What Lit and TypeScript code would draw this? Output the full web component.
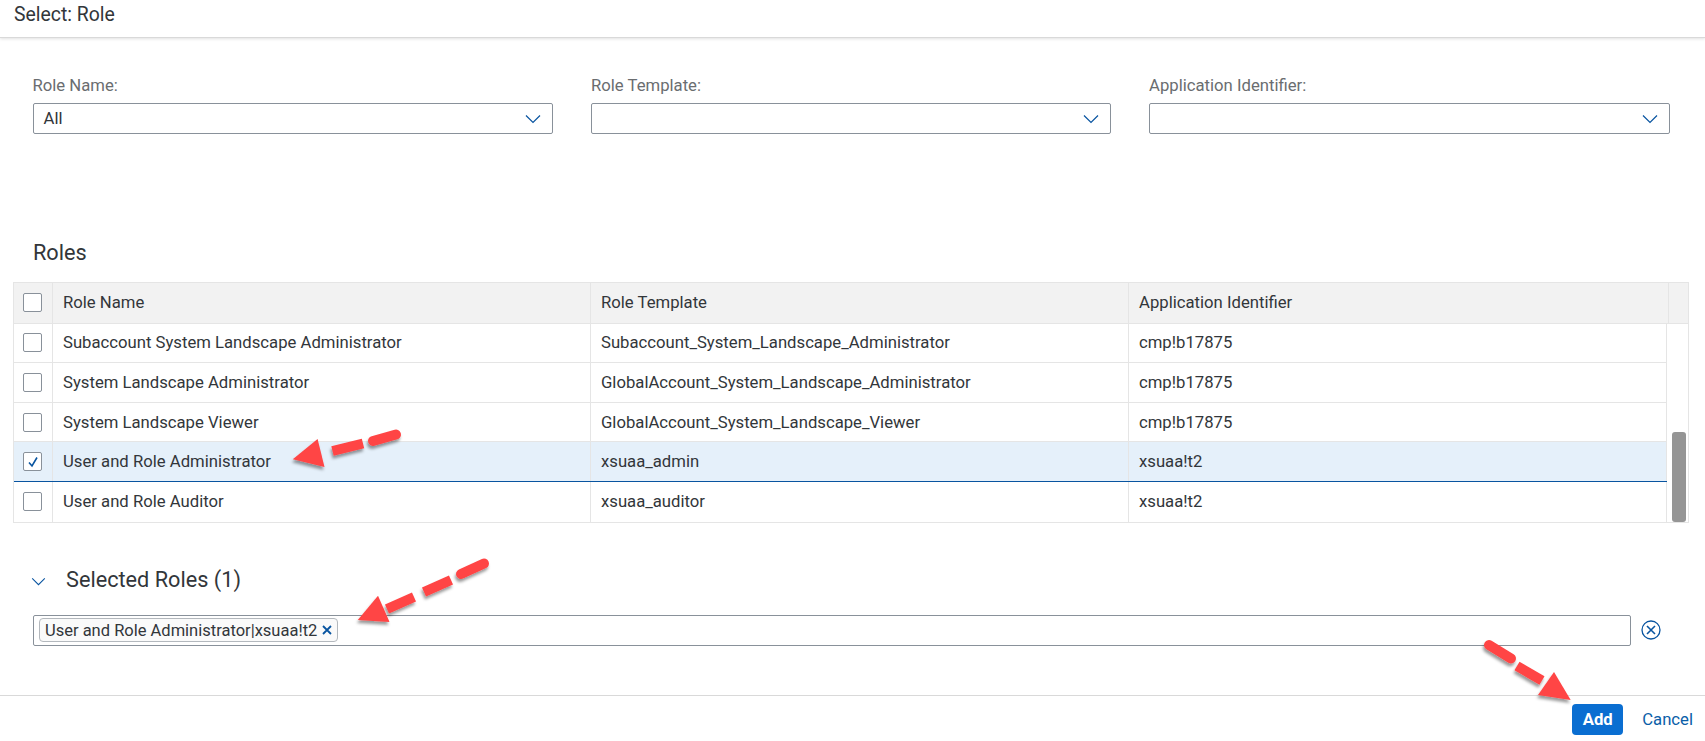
import { LitElement, html, css, svg } from 'lit';
import { customElement } from 'lit/decorators.js';

const ROWS = [
  ['Subaccount System Landscape Administrator', 'Subaccount_System_Landscape_Administrator', 'cmp!b17875'],
  ['System Landscape Administrator', 'GlobalAccount_System_Landscape_Administrator', 'cmp!b17875'],
  ['System Landscape Viewer', 'GlobalAccount_System_Landscape_Viewer', 'cmp!b17875'],
  ['User and Role Administrator', 'xsuaa_admin', 'xsuaa!t2'],
  ['User and Role Auditor', 'xsuaa_auditor', 'xsuaa!t2'],
];
const SELECTED = 3;

const chevron = html`<svg class="chev" viewBox="0 0 16 10" width="16" height="10"><path d="M1 1.5 L8 8.5 L15 1.5" fill="none" stroke="#0854a0" stroke-width="1.2"/></svg>`;

@customElement('app-root')
export class AppRoot extends LitElement {
  static styles = css`
    :host {
      display: block;
      position: relative;
      height: 741px;
      overflow: hidden;
      background: #fff;
      color: #32363a;
      font-family: Roboto, "Liberation Sans", sans-serif;
      font-size: 16.7px;
    }
    * { box-sizing: border-box; }

    .head {
      height: 38px;
      padding: 3px 0 0 14px;
      font-size: 19.4px;
      line-height: 24px;
      border-bottom: 1px solid #d9d9d9;
      box-shadow: 0 1px 3px rgba(0, 0, 0, 0.12);
    }

    .filters {
      display: grid;
      grid-template-columns: 520px 519.5px 521px;
      column-gap: 38.5px;
      padding: 37px 0 0 32.5px;
    }
    .label {
      display: block;
      height: 28px;
      line-height: 22px;
      color: #6a6d70;
    }
    .select {
      display: flex;
      align-items: center;
      justify-content: space-between;
      height: 31px;
      padding: 0 11px 0 10px;
      border: 1px solid #89919a;
      border-radius: 2px;
    }

    h2 {
      margin: 0;
      font-weight: 400;
      font-size: 21.7px;
    }
    .roles-title {
      margin: 103px 0 0 33px;
      height: 45px;
      line-height: 31px;
    }

    .table {
      margin-left: 13px;
      width: 1676px;
      border: 1px solid #e5e5e5;
    }
    .row {
      display: grid;
      grid-template-columns: 39px 538px 538px 538px;
      height: 39.6px;
      border-bottom: 1px solid #e5e5e5;
    }
    .row.header {
      grid-template-columns: 39px 538px 538px 539.5px 1fr;
      height: 40.6px;
      background: #f2f2f2;
    }
    .row.selected {
      background: #e5f0fa;
      border-bottom-color: #0854a0;
    }
    .row.last {
      border-bottom: none;
    }
    .cell {
      display: flex;
      align-items: center;
      padding-left: 10px;
      border-right: 1px solid #e5e5e5;
      white-space: nowrap;
      overflow: hidden;
    }
    .cell.box {
      padding-left: 9px;
    }
    .check {
      display: flex;
      align-items: center;
      justify-content: center;
      width: 19px;
      height: 19px;
      background: #fff;
      border: 1px solid #89919a;
      border-radius: 2px;
    }
    .body {
      display: flex;
    }
    .rows {
      flex: none;
      width: 1653px;
    }
    .track {
      flex: 1;
      display: flex;
      flex-direction: column;
      justify-content: flex-end;
      padding: 0 2px 0 4.5px;
    }
    .thumb {
      height: 90px;
      background: #959595;
      border-radius: 3px;
    }

    .selected-head {
      display: flex;
      align-items: center;
      margin: 39.4px 0 0 31px;
      height: 36px;
    }
    .selected-head svg {
      flex: none;
      margin-top: 3px;
    }
    .selected-head h2 {
      margin-left: 20px;
    }

    .tokens-line {
      display: flex;
      align-items: center;
      margin: 17px 0 0 33px;
    }
    .tokens {
      display: flex;
      align-items: center;
      width: 1598px;
      height: 31px;
      padding-left: 5px;
      border: 1px solid #89919a;
      border-radius: 2px;
    }
    .token {
      display: flex;
      align-items: center;
      height: 24px;
      padding: 0 5px 0 5px;
      gap: 5px;
      font-size: 16.5px;
      background: #fafafa;
      border: 1px solid #b3b8bd;
      border-radius: 4px;
      white-space: nowrap;
    }
    .clear {
      margin-left: 10px;
      flex: none;
    }

    .foot {
      display: flex;
      align-items: center;
      justify-content: flex-end;
      margin-top: 49px;
      height: 46px;
      padding: 0 12px 6px 0;
      border-top: 1px solid #d9d9d9;
    }
    .add {
      display: flex;
      align-items: center;
      justify-content: center;
      width: 51px;
      height: 31px;
      margin-top: 8px;
      font-weight: 700;
      color: #fff;
      background: #0a6ed1;
      border-radius: 4px;
    }
    .cancel {
      margin: 8px 0 0 19px;
      color: #0a5ea8;
    }

    .marks {
      position: absolute;
      left: 0;
      top: 0;
      pointer-events: none;
    }
  `;

  private arrow(dashes: number[][], head: string) {
    return svg`
      ${dashes.map(
        (d, i) => svg`<line x1=${d[0]} y1=${d[1]} x2=${d[2]} y2=${d[3]} stroke-linecap=${i === 0 ? 'round' : 'butt'} />`
      )}
      <polygon points=${head} stroke="none" fill="#ff4444" />
    `;
  }

  render() {
    return html`
      <div class="head">Select: Role</div>

      <div class="filters">
        <div><span class="label">Role Name:</span><div class="select"><span>All</span>${chevron}</div></div>
        <div><span class="label">Role Template:</span><div class="select"><span></span>${chevron}</div></div>
        <div><span class="label">Application Identifier:</span><div class="select"><span></span>${chevron}</div></div>
      </div>

      <h2 class="roles-title">Roles</h2>

      <div class="table">
        <div class="row header">
          <div class="cell box"><span class="check"></span></div>
          <div class="cell">Role Name</div>
          <div class="cell">Role Template</div>
          <div class="cell">Application Identifier</div>
          <div></div>
        </div>
        <div class="body">
          <div class="rows">
            ${ROWS.map((r, i) => html`
              <div class="row ${i === SELECTED ? 'selected' : ''} ${i === ROWS.length - 1 ? 'last' : ''}">
                <div class="cell box">
                  <span class="check">
                    ${i === SELECTED
                      ? html`<svg viewBox="0 0 12 12" width="12" height="12"><path d="M2 6.5 L5 10 L10 1.5" fill="none" stroke="#0854a0" stroke-width="1.6"/></svg>`
                      : ''}
                  </span>
                </div>
                ${r.map((t) => html`<div class="cell">${t}</div>`)}
              </div>
            `)}
          </div>
          <div class="track"><div class="thumb"></div></div>
        </div>
      </div>

      <div class="selected-head">
        <svg viewBox="0 0 16 10" width="15" height="9"><path d="M1 1.5 L8 8.5 L15 1.5" fill="none" stroke="#0854a0" stroke-width="1.2"/></svg>
        <h2>Selected Roles (1)</h2>
      </div>

      <div class="tokens-line">
        <div class="tokens">
          <span class="token">User and Role Administrator|xsuaa!t2
            <svg viewBox="0 0 10 10" width="10" height="10"><path d="M1 1 L9 9 M9 1 L1 9" stroke="#0854a0" stroke-width="1.8"/></svg>
          </span>
        </div>
        <svg class="clear" viewBox="0 0 20 20" width="20" height="20">
          <circle cx="10" cy="10" r="9" fill="none" stroke="#0854a0" stroke-width="1.3"/>
          <path d="M6 6 L14 14 M14 6 L6 14" stroke="#0854a0" stroke-width="1.6"/>
        </svg>
      </div>

      <div class="foot">
        <span class="add">Add</span>
        <span class="cancel">Cancel</span>
      </div>

      <svg class="marks" width="1705" height="741" fill="none" stroke="#ff4444" stroke-width="10">
        <defs>
          <filter id="sh" x="-20%" y="-20%" width="140%" height="140%">
            <feDropShadow dx="-1" dy="3" stdDeviation="1.5" flood-color="#000" flood-opacity="0.4"/>
          </filter>
        </defs>
        <g filter="url(#sh)">
          ${this.arrow([[396, 434.5, 373, 441], [363, 443.5, 332.5, 451]], '292.8,459.3 317.6,439 324.5,467')}
          ${this.arrow([[484, 563.5, 461, 574], [451, 580, 424, 592], [414, 597, 387, 609]], '357.8,620 378,595.7 389.6,622')}
          ${this.arrow([[1489, 645, 1511, 658.5], [1517, 666, 1542, 680.5]], '1570.7,700 1538,695 1554,672')}
        </g>
      </svg>
    `;
  }
}
